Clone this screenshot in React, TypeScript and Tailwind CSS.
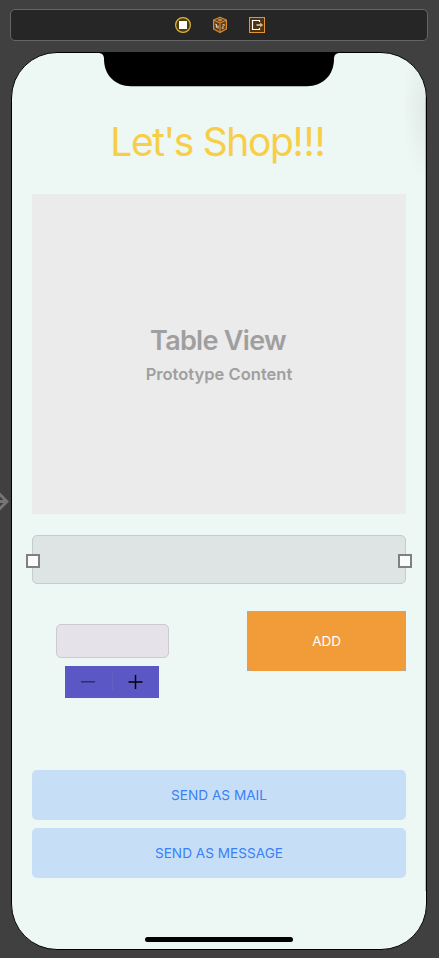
import React from "react";

function SceneDock() {
  return (
    <div className="ml-[10px] mt-[9px] flex h-8 w-[418px] items-center justify-center gap-[19px] rounded-[5px] border border-[#666666] bg-[#262626] pl-[2px]">
      <svg width="18" height="18" viewBox="0 0 18 18">
        <circle cx="9" cy="9" r="7.4" fill="#4a3c0c" stroke="#e3b53c" strokeWidth="1.2" />
        <rect x="5" y="5" width="8" height="8" fill="#fff" />
      </svg>
      <svg width="18" height="18" viewBox="0 0 18 18">
        <path d="M9 1.3 15.4 4v9L9 16.6 2.6 13V4Z" fill="#5c3b14" stroke="#db8a32" strokeWidth="1.2" strokeLinejoin="round" />
        <path d="M2.6 4.2 9 7l6.4-2.8M9 7v9.4" fill="none" stroke="#db8a32" strokeWidth="1.1" />
        <path d="M9 2.5 12 4 9 5.5 6 4Z" fill="#b98b60" />
        <path d="m4.3 8.1 1.1.5v3.2m1.6-2.4v3" fill="none" stroke="#e5d8c9" strokeWidth="1.1" />
        <path d="m11.2 9.1 2-.9v1.7l-2 1.2v1.7l2-1" fill="none" stroke="#c9b6a2" strokeWidth="1" />
      </svg>
      <svg width="18" height="18" viewBox="0 0 18 18">
        <rect x="1.5" y="1.5" width="15" height="15" fill="#4f3210" stroke="#e19438" strokeWidth="1" />
        <path d="M11.5 6V4.5h-7v9h7V12" fill="none" stroke="#fff" strokeWidth="1.2" />
        <path d="M8.5 9H13" stroke="#ccc" strokeWidth="1.6" />
        <path d="m12.2 6.5 3 2.5-3 2.5Z" fill="#d2b797" />
      </svg>
    </div>
  );
}

function ResizeHandle({ side }: { side: "left" | "right" }) {
  return (
    <span
      className={`absolute top-[18px] size-[14px] border-2 border-[#808080] bg-[#fbfbfb] ${
        side === "left" ? "-left-[7px]" : "-right-[7px]"
      }`}
    />
  );
}

function SendButton({ label }: { label: string }) {
  return (
    <button className="flex h-[50px] w-full items-center justify-center rounded-[5px] bg-[#c7dff6] text-[13.6px] tracking-[0.02px] text-[#3a80f7]">
      {label}
    </button>
  );
}

export default function App() {
  return (
    <div className="relative h-[958px] w-[439px] overflow-hidden bg-[#404040] font-['Inter',sans-serif]">
      <SceneDock />
      <svg className="absolute left-0 top-[491px]" width="9" height="20" viewBox="0 0 9 20">
        <path d="M0 10.5H7M-1 2.5 7 10.5-1 18.5" fill="none" stroke="#757575" strokeWidth="2.8" />
      </svg>

      <main className="relative ml-[11px] mt-[11px] flex h-[898px] w-[416px] flex-col overflow-hidden rounded-[46px] border border-black bg-[#edf7f4] px-5">
        <span className="absolute right-0 top-[44px] h-[794px] w-px bg-[#b3bfbc]" />
        <span className="absolute -right-[20px] top-[-20px] h-[150px] w-[44px] bg-radial from-black/5 to-transparent to-70%" />
        <svg className="absolute -top-px left-[86px]" width="242" height="35" viewBox="0 0 242 35">
          <path d="M0 0H242V1C238 1 236 3 236 7C236 23 225 34.2 209 34.2H33C17 34.2 6 23 6 7C6 3 4 1 0 1Z" fill="#000" />
        </svg>

        <h1 className="mt-[65px] h-[48px] pr-[2px] text-center text-[39px] leading-[48px] tracking-[-1.4px] text-[#f7ce46]">
          Let's Shop<span className="tracking-[-0.1px]">!!!</span>
        </h1>

        <section className="mt-[28px] flex h-[320px] flex-col items-center bg-[#ebebeb] font-semibold text-[#9f9f9f]">
          <p className="mt-[130px] pr-[2px] text-[27px] leading-[34px] tracking-[-0.7px]">Table View</p>
          <p className="mt-[4px] text-[16.5px] leading-[24px] tracking-[0.02px]">Prototype Content</p>
        </section>

        <div className="relative mt-[21px] h-[49px] rounded-[5px] border border-[#c5cdcc] bg-[#dde4e3]">
          <ResizeHandle side="left" />
          <ResizeHandle side="right" />
        </div>

        <div className="mt-[27px] flex justify-between">
          <div className="ml-6 mt-[13px] flex w-[113px] flex-col">
            <div className="h-[34px] w-full rounded-[5px] border border-[#cccad0] bg-[#e5e3e9]" />
            <div className="ml-[9px] mt-2 flex h-8 w-[94px] items-center bg-[#5b58c5]">
              <svg width="94" height="32" viewBox="0 0 94 32">
                <path d="M16 15.8H30" stroke="#302e73" strokeWidth="1.5" />
                <path d="M47.5 7V24" stroke="#6461c2" />
                <path d="M63.5 16H77.5M70.5 9V23" stroke="#000" strokeWidth="1.5" />
              </svg>
            </div>
          </div>
          <div className="h-[60px] w-[159px] bg-[#a5aaa8]">
            <button className="flex size-full items-center justify-center rounded-[6px] bg-[#f19c38] text-[13.6px] tracking-[-0.1px] text-white">
              ADD
            </button>
          </div>
        </div>

        <div className="mt-[72px] flex flex-col gap-2">
          <SendButton label="SEND AS MAIL" />
          <SendButton label="SEND AS MESSAGE" />
        </div>

        <span className="mt-[59px] h-[5px] w-[148px] self-center rounded-full bg-black" />
      </main>
    </div>
  );
}
